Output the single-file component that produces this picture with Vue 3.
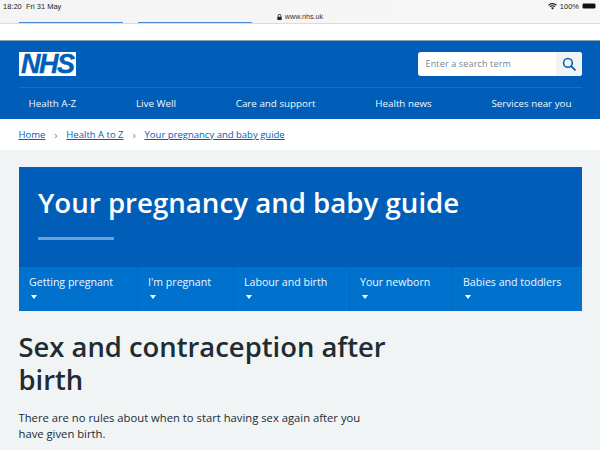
<script setup>
const nav = ['Health A-Z', 'Live Well', 'Care and support', 'Health news', 'Services near you']
const tabs = [
  { label: 'Getting pregnant', w: 119 },
  { label: "I'm pregnant", w: 96 },
  { label: 'Labour and birth', w: 116 },
  { label: 'Your newborn', w: 103 },
  { label: 'Babies and toddlers', w: 129 },
]
</script>

<template>
  <div class="page">
    <div class="chrome">
      <div class="status">
        <span class="time">18:20&nbsp;&nbsp;Fri 31 May</span>
        <span class="right">
          <svg class="wifi" viewBox="0 0 16 12" width="9" height="7"><path d="M8 11.5 5.6 8.7a3.4 3.4 0 0 1 4.8 0zM4.4 7.4 3 5.8a7 7 0 0 1 10 0l-1.400 1.600a5 5 0 0 0-7.200 0zM1.800 4.600.4 3a10.800 10.800 0 0 1 15.200 0l-1.400 1.600a8.800 8.800 0 0 0-12.400 0z" fill="#111"/></svg>
          <span>100%</span>
          <span class="battery"><i></i></span>
        </span>
      </div>
      <div class="url">
        <svg viewBox="0 0 8 10" width="5" height="6"><path d="M1 4.500V3a3 3 0 0 1 6 0v1.500h.6V10H.4V4.500zM2.200 4.500h3.600V3a1.800 1.800 0 0 0-3.600 0z" fill="#222"/></svg>
        <span>www.nhs.uk</span>
      </div>
      <div class="peek"><i class="a"></i><i class="b"></i></div>
    </div>
    <div class="gap"></div>

    <header class="header">
      <div class="top">
        <div class="logo">NHS</div>
        <div class="search">
          <span class="ph">Enter a search term</span>
          <span class="btn">
            <svg viewBox="0 0 16 16" width="14" height="14"><circle cx="6.800" cy="6.800" r="5" fill="none" stroke="#005eb8" stroke-width="1.800"/><path d="m10.500 10.500 4.300 4.300" stroke="#005eb8" stroke-width="2" stroke-linecap="round"/></svg>
          </span>
        </div>
      </div>
      <nav class="nav">
        <span v-for="n in nav" :key="n">{{ n }}</span>
      </nav>
    </header>

    <div class="crumbs">
      <a>Home</a><span class="sep">›</span><a>Health A to Z</a><span class="sep">›</span><a>Your pregnancy and baby guide</a>
    </div>

    <main class="main">
      <section class="hero">
        <div class="hero-top">
          <h2>Your pregnancy and baby guide</h2>
          <div class="rule"></div>
        </div>
        <div class="tabs">
          <div v-for="t in tabs" :key="t.label" class="tab" :style="{ flexBasis: t.w + 'px' }">
            <span>{{ t.label }}</span>
            <i class="caret"></i>
          </div>
        </div>
      </section>
      <h1>Sex and contraception after birth</h1>
      <p>There are no rules about when to start having sex again after you have given birth.</p>
    </main>
  </div>
</template>

<style>
html, body { margin: 0; overflow: hidden; }
</style>

<style scoped>
.page {
  width: 600px;
  height: 450px;
  overflow: hidden;
  background: #f0f4f5;
  font-family: "Open Sans", "Noto Sans", sans-serif;
  color: #212b32;
}
.chrome {
  height: 24px;
  background: linear-gradient(90deg, #f4f4f4, #f7f7f7);
  border-bottom: 1px solid #dcdcdc;
  box-sizing: border-box;
  display: flex;
  flex-direction: column;
  position: relative;
}
.status {
  display: flex;
  justify-content: space-between;
  align-items: center;
  height: 10px;
  padding: 1px 4px 0 3px;
  font-size: 7.500px;
  font-family: "Liberation Sans", sans-serif;
  color: #222;
}
.right { display: flex; align-items: center; gap: 3px; }
.battery {
  width: 14px;
  height: 6px;
  border: 1px solid #888;
  border-radius: 2px;
  box-sizing: border-box;
  display: flex;
}
.battery i { flex: 1; background: #111; }
.url {
  display: flex;
  justify-content: center;
  align-items: center;
  gap: 3px;
  height: 11px;
  font-size: 7.200px;
  font-family: "Liberation Sans", sans-serif;
  color: #333;
}
.peek { position: absolute; left: 0; right: 0; bottom: 0; height: 1px; }
.peek i { position: absolute; height: 1px; background: #4a8acb; top: 0; }
.peek .a { left: 19px; width: 104px; }
.peek .b { left: 138px; width: 114px; }
.gap { height: 17px; background: #fff; border-bottom: 1px solid #8fa3b5; box-sizing: border-box; }
.header { background: #005eb8; padding: 0 18.500px; height: 78px; box-sizing: border-box; }
.top {
  display: flex;
  justify-content: space-between;
  align-items: center;
  padding: 11px 0;
  height: 47px;
  box-sizing: border-box;
  border-bottom: 1px solid #1a6fc1;
}
.logo {
  width: 57.500px;
  height: 24px;
  background: #fff;
  color: #005eb8;
  font: italic 700 27px/24px "Liberation Sans", sans-serif;
  letter-spacing: -1.500px;
  text-align: center;
  -webkit-text-stroke: 0.400px #005eb8;
}
.search {
  width: 163.500px;
  height: 24px;
  background: #fff;
  border-radius: 3px;
  display: flex;
  justify-content: space-between;
  overflow: hidden;
}
.ph { font-size: 9px; line-height: 24px; color: #768692; padding-left: 7.500px; letter-spacing: 0.150px; }
.btn { width: 26px; background: #f0f4f5; display: flex; align-items: center; justify-content: center; }
.nav {
  display: flex;
  justify-content: space-between;
  padding: 8px 10px 0;
  font-size: 9.800px;
  line-height: 15px;
  color: #f4f8fb;
}
.crumbs {
  height: 31px;
  background: #fff;
  padding: 0 18.500px;
  box-sizing: border-box;
  display: flex;
  align-items: center;
  font-size: 9.500px;
  color: #005eb8;
}
.crumbs a { text-decoration: underline; }
.sep { color: #768692; width: 21px; text-align: center; font-size: 11px; }
.main { padding: 17px 18.500px 0; }
.hero { width: 563px; }
.hero-top { background: #005eb8; height: 100px; padding: 19px 19.500px 0; box-sizing: border-box; }
h2 {
  margin: 0;
  color: #fff;
  font-size: 27.650px;
  line-height: 32px;
  font-weight: 600;
}
.rule { width: 76px; height: 3px; background: #6ba0d6; margin-top: 19px; }
.tabs { display: flex; background: #0072ce; height: 44px; }
.tab {
  flex: 0 0 auto;
  box-sizing: border-box;
  padding: 8px 0 0 10.500px;
  border-right: 1px solid #0067bd;
  font-size: 10.600px;
  line-height: 15px;
  color: #f0f6fb;
  display: flex;
  flex-direction: column;
}
.tab:last-child { border-right: 0; }
.caret {
  width: 0;
  height: 0;
  margin: 5px 0 0 2px;
  border-left: 3.500px solid transparent;
  border-right: 3.500px solid transparent;
  border-top: 4px solid #fff;
}
h1 {
  margin: 19px 0 0;
  width: 400px;
  font-size: 27.400px;
  line-height: 33px;
  font-weight: 600;
  color: #212b32;
}
p {
  margin: 14px 0 0;
  width: 350px;
  font-size: 11.250px;
  line-height: 16px;
  color: #212b32;
}
</style>
